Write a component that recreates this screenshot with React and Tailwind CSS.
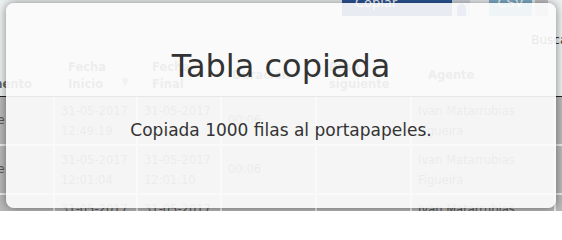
import React from "react";

const cols = "grid-cols-[100px_83px_84px_95px_95px_144px_100px]";

const rows = [
    {
        tipo: "Saliente",
        inicio: ["31-05-2017", "12:49:19"],
        fin: ["31-05-2017", "12:49:25"],
        dur: "00:06",
        agente: ["Ivan Matarrubias", "Figueira"],
    },
    {
        tipo: "Saliente",
        inicio: ["31-05-2017", "12:01:04"],
        fin: ["31-05-2017", "12:01:10"],
        dur: "00:06",
        agente: ["Ivan Matarrubias", "Figueira"],
    },
    {
        tipo: "Recibido",
        inicio: ["31-05-2017", "11:58:02"],
        fin: ["31-05-2017", "11:58:08"],
        dur: "00:06",
        agente: ["Ivan Matarrubias", "Figueira"],
    },
];

const Cell = ({ children, className = "" }) => (
    <div
        className={`flex flex-col justify-center px-[6px] bg-[#b9b9b9] border-r-2 border-b-2 border-[#ececec] ${className}`}
    >
        {children}
    </div>
);

const Head = ({ children, className = "" }) => (
    <div
        className={`flex flex-col justify-center h-[42px] border-b border-[#222] text-[11.5px] leading-[17px] font-bold text-[#666] whitespace-nowrap ${className}`}
    >
        {children}
    </div>
);

const Page = () => (
    <div className="flex flex-col">
        {/* export buttons */}
        <div className="flex justify-end items-start pr-[14px] -mt-[10px] h-[26px]">
            <div className="w-[110px] h-[26px] bg-[#2b5698] text-white text-[13px] leading-[26px] pl-[13px]">
                Copiar
            </div>
            <div className="w-[18px] h-[26px] bg-[#d3d7de] flex justify-center items-end">
                <div className="w-[9px] h-[12px] bg-[#4a63a8] rounded-t-full" />
            </div>
            <div className="w-[19px]" />
            <div className="w-[43px] h-[26px] bg-[#7fb1cd] text-white text-[13px] leading-[26px] text-center">
                CSV
            </div>
            <div className="w-[3px]" />
            <div className="w-[13px] h-[26px] bg-[#c6c6c6]" />
        </div>

        {/* search */}
        <div className="flex justify-end items-center h-[39px] pt-[8px] text-[12px] text-[#333]">
            <span className="mr-[-14px] whitespace-nowrap">Buscar:</span>
        </div>

        {/* table */}
        <div className={`grid ${cols} -ml-[45px] w-[601px]`}>
            <Head className="pl-[3px]">
                <span>Tipo</span>
                <span>Documento</span>
            </Head>
            <Head className="relative pl-[13px]">
                <span>Fecha</span>
                <span>Inicio</span>
                <span className="absolute right-[9px] top-[18px] text-[10px] text-[#999]">▼</span>
            </Head>
            <Head className="pl-[14px]">
                <span>Fecha</span>
                <span>Final</span>
            </Head>
            <Head className="pl-[10px]">
                <span>Duración</span>
            </Head>
            <Head className="pl-[12px]">
                <span>Paso</span>
                <span>siguiente</span>
            </Head>
            <Head className="pl-[16px]">
                <span>Agente</span>
            </Head>
            <Head className="pl-[6px]">
                <span>Acción</span>
            </Head>

            {rows.map((r, i) => (
                <React.Fragment key={i}>
                    <Cell className="h-[49px] !pl-[3px] text-[11.5px] text-[#555] whitespace-nowrap">
                        {r.tipo}
                    </Cell>
                    <Cell className="h-[49px] text-[11.5px] leading-[20px] text-[#555]">
                        <span>{r.inicio[0]}</span>
                        <span>{r.inicio[1]}</span>
                    </Cell>
                    <Cell className="h-[49px] text-[11.5px] leading-[20px] text-[#555]">
                        <span>{r.fin[0]}</span>
                        <span>{r.fin[1]}</span>
                    </Cell>
                    <Cell className="h-[49px] text-[11.5px] text-[#555]">
                        {r.dur}
                    </Cell>
                    <Cell className="h-[49px]" />
                    <Cell className="h-[49px] text-[11.5px] leading-[20px] text-[#555]">
                        <span>{r.agente[0]}</span>
                        <span>{r.agente[1]}</span>
                    </Cell>
                    <Cell className="h-[49px]" />
                </React.Fragment>
            ))}
        </div>
    </div>
);

export default function App() {
    return (
        <div className="relative w-[562px] h-[211px] overflow-hidden bg-[#eef1f1] font-['DejaVu_Sans',Verdana,sans-serif]">
            <Page />

            {/* copy confirmation */}
            <div className="absolute left-[6px] top-[3px] w-[550px] h-[205px] rounded-[8px] bg-[#fbfbfb]/[0.91] shadow-[0_0_10px_rgba(0,0,0,0.45)] flex flex-col items-center text-[#333]">
                <h2 className="mt-[44px] text-[32px] leading-[38px] font-normal">
                    Tabla copiada
                </h2>
                <p className="mt-[33px] text-[17px] leading-[24px]">
                    Copiada 1000 filas al portapapeles.
                </p>
            </div>
        </div>
    );
}
